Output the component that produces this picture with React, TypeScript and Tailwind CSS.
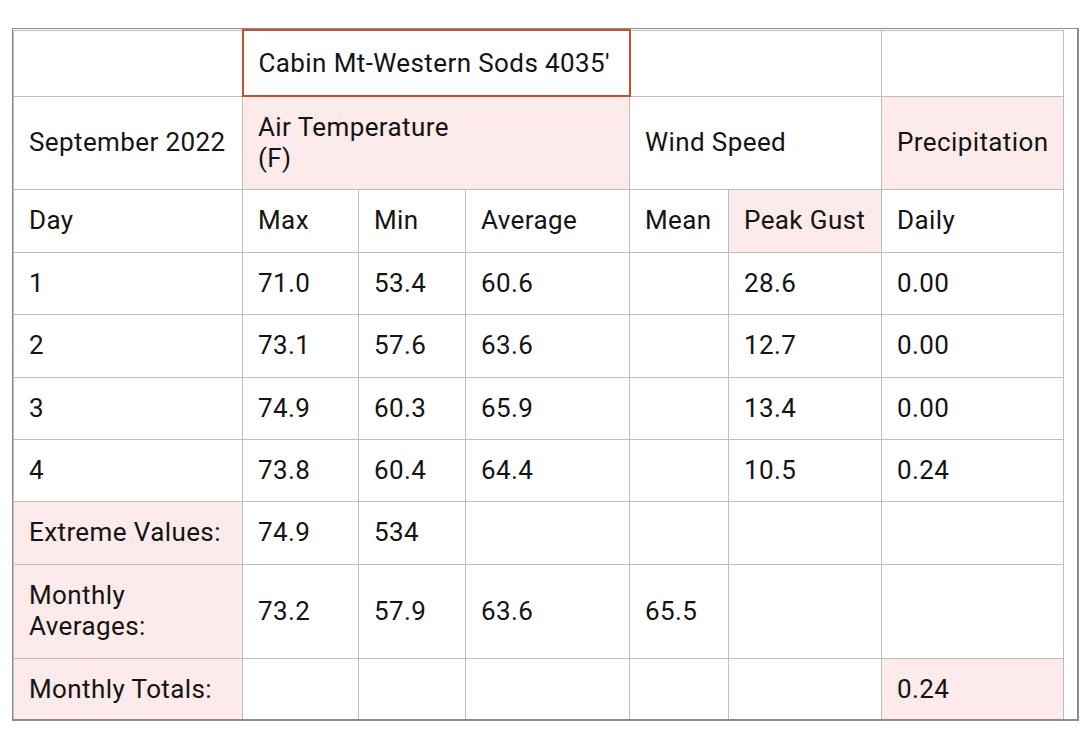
import React from "react";

const pink = "bg-[#fdeaea]";

type Cell = { t?: React.ReactNode; pink?: boolean; span?: number };

const dataRows: string[][] = [
  ["1", "71.0", "53.4", "60.6", "", "28.6", "0.00"],
  ["2", "73.1", "57.6", "63.6", "", "12.7", "0.00"],
  ["3", "74.9", "60.3", "65.9", "", "13.4", "0.00"],
  ["4", "73.8", "60.4", "64.4", "", "10.5", "0.24"],
];

const heights = [62, 63, 62, 62];

function Td({ c, h }: { c: Cell; h: number }) {
  return (
    <td
      colSpan={c.span}
      className={`border border-[#bdbdbd] px-[15px] py-0 align-middle leading-[31px] ${c.pink ? pink : "bg-white"}`}
      style={{ height: h }}
    >
      {c.t}
    </td>
  );
}

export default function App() {
  return (
    <div className="w-[1080px] h-[736px] bg-white pt-[28px] pl-[12px]" style={{ fontFamily: "Roboto, 'Noto Sans', sans-serif" }}>
      <div className="w-[1067px] h-[693px] border border-[#8c8c8c] border-b-[2px] border-r-[2px] overflow-hidden">
        <table className="border-collapse table-fixed text-[26px] tracking-[0.4px] text-[#141414]" style={{ width: 1050 }}>
          <colgroup>
            <col className="w-[229px]" />
            <col className="w-[116px]" />
            <col className="w-[107px]" />
            <col className="w-[164px]" />
            <col className="w-[99px]" />
            <col className="w-[153px]" />
            <col className="w-[182px]" />
          </colgroup>
          <tbody>
            <tr>
              <td className="border border-[#bdbdbd] h-[66px]"></td>
              <td colSpan={3} className="border-2 border-[#c4532c] px-[15px] h-[66px] align-middle leading-[31px] bg-white">
                Cabin Mt-Western Sods 4035'
              </td>
              <td colSpan={2} className="border border-[#bdbdbd] h-[66px]"></td>
              <td className="border border-[#bdbdbd] h-[66px]"></td>
            </tr>
            <tr>
              <Td h={93} c={{ t: "September 2022" }} />
              <td colSpan={3} className={`border border-[#bdbdbd] px-[15px] h-[93px] align-middle leading-[31px] ${pink}`}>
                Air Temperature
                <br />
                (F)
              </td>
              <Td h={93} c={{ t: "Wind Speed", span: 2 }} />
              <Td h={93} c={{ t: "Precipitation", pink: true }} />
            </tr>
            <tr>
              <Td h={63} c={{ t: "Day" }} />
              <Td h={63} c={{ t: "Max" }} />
              <Td h={63} c={{ t: "Min" }} />
              <Td h={63} c={{ t: "Average" }} />
              <Td h={63} c={{ t: "Mean" }} />
              <Td h={63} c={{ t: "Peak Gust", pink: true }} />
              <Td h={63} c={{ t: "Daily" }} />
            </tr>
            {dataRows.map((r, i) => (
              <tr key={i}>
                {r.map((v, j) => (
                  <Td key={j} h={heights[i]} c={{ t: v }} />
                ))}
              </tr>
            ))}
            <tr>
              <Td h={63} c={{ t: "Extreme Values:", pink: true }} />
              <Td h={63} c={{ t: "74.9" }} />
              <Td h={63} c={{ t: "534" }} />
              <Td h={63} c={{ t: "" }} />
              <Td h={63} c={{ t: "" }} />
              <Td h={63} c={{ t: "" }} />
              <Td h={63} c={{ t: "" }} />
            </tr>
            <tr>
              <Td h={94} c={{ t: (<>Monthly<br />Averages:</>), pink: true }} />
              <Td h={94} c={{ t: "73.2" }} />
              <Td h={94} c={{ t: "57.9" }} />
              <Td h={94} c={{ t: "63.6" }} />
              <Td h={94} c={{ t: "65.5" }} />
              <Td h={94} c={{ t: "" }} />
              <Td h={94} c={{ t: "" }} />
            </tr>
            <tr>
              <Td h={62} c={{ t: "Monthly Totals:", pink: true }} />
              <Td h={62} c={{ t: "" }} />
              <Td h={62} c={{ t: "" }} />
              <Td h={62} c={{ t: "" }} />
              <Td h={62} c={{ t: "" }} />
              <Td h={62} c={{ t: "" }} />
              <Td h={62} c={{ t: "0.24", pink: true }} />
            </tr>
          </tbody>
        </table>
      </div>
    </div>
  );
}
